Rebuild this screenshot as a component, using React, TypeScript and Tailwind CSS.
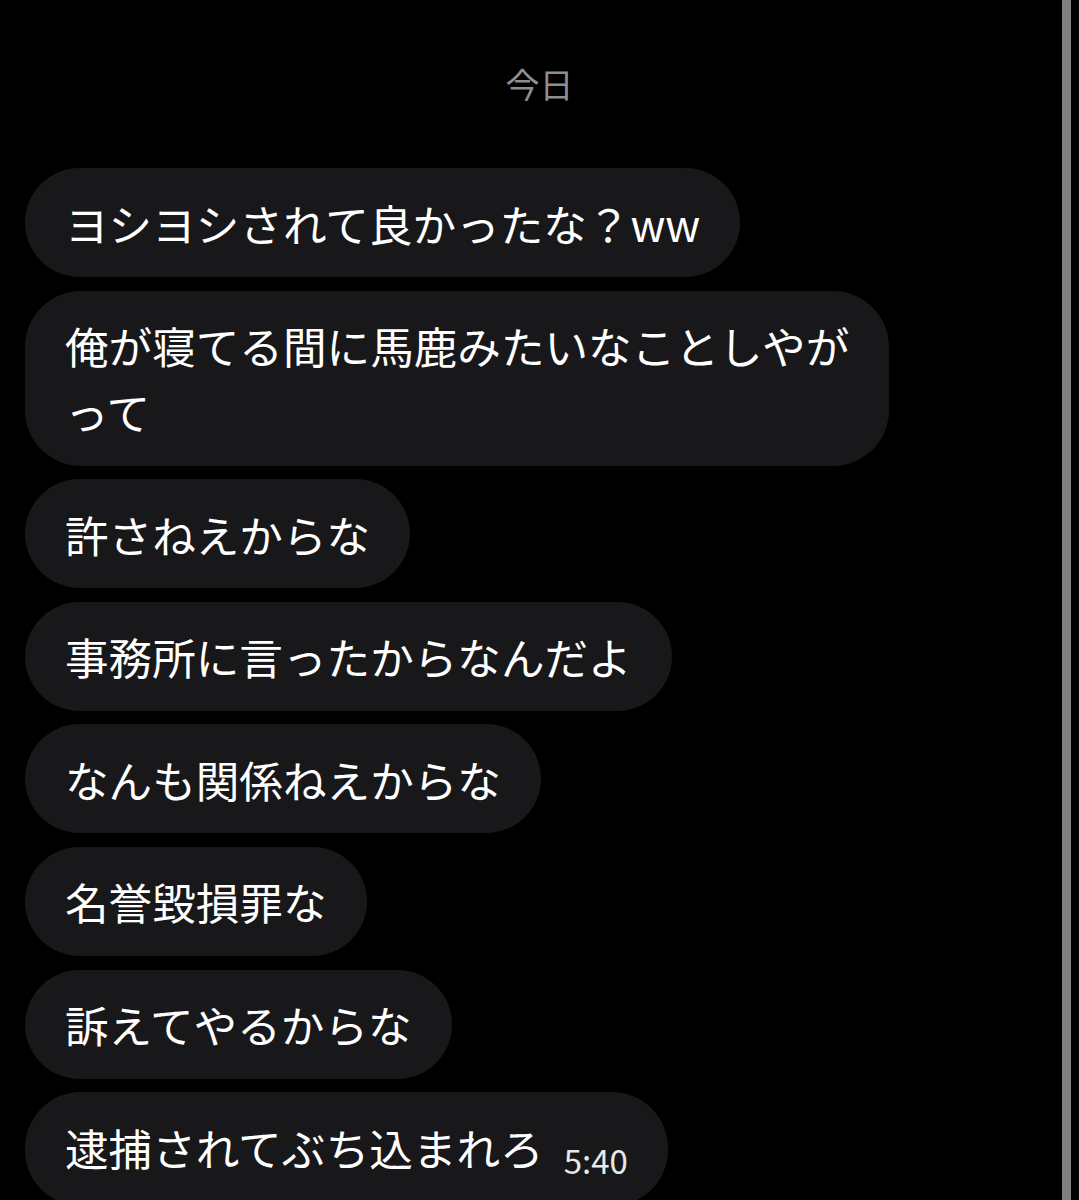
const messages = [
  'ヨシヨシされて良かったな？ww',
  '俺が寝てる間に馬鹿みたいなことしやが\nって',
  '許さねえからな',
  '事務所に言ったからなんだよ',
  'なんも関係ねえからな',
  '名誉毀損罪な',
  '訴えてやるからな',
]

function Bubble({ text, time }: { text: string; time?: string }) {
  const lines = text.split('\n')
  return (
    <div className="w-fit rounded-[56px] bg-[#18181a] pl-[40px] pr-[40px] py-[21.5px] text-white text-[43.6px] leading-[66px]">
      {lines.map((l, i) => (
        <div key={i} className="whitespace-nowrap">
          {l}
          {time && i === lines.length - 1 && (
            <span className="ml-[20px] text-[33px] text-[#e8e8e8] relative top-[8px]">{time}</span>
          )}
        </div>
      ))}
    </div>
  )
}

export default function App() {
  return (
    <div
      className="relative w-[1079px] h-[1200px] overflow-hidden bg-black"
      style={{ fontFamily: '"Noto Sans CJK JP", "Noto Sans", sans-serif' }}
    >
      <div className="pt-[63px] text-center text-[34px] leading-[42px] text-[#8e8e8e]">今日</div>
      <div className="mt-[63px] pl-[25px] flex flex-col gap-[13.6px]">
        {messages.map((m, i) => (
          <Bubble key={i} text={m} />
        ))}
        <Bubble text="逮捕されてぶち込まれろ" time="5:40" />
      </div>
      {/* right edge bar */}
      <div className="absolute top-0 bottom-0 left-[1062px] w-[9px] bg-[#7f7f7f]" />
    </div>
  )
}
